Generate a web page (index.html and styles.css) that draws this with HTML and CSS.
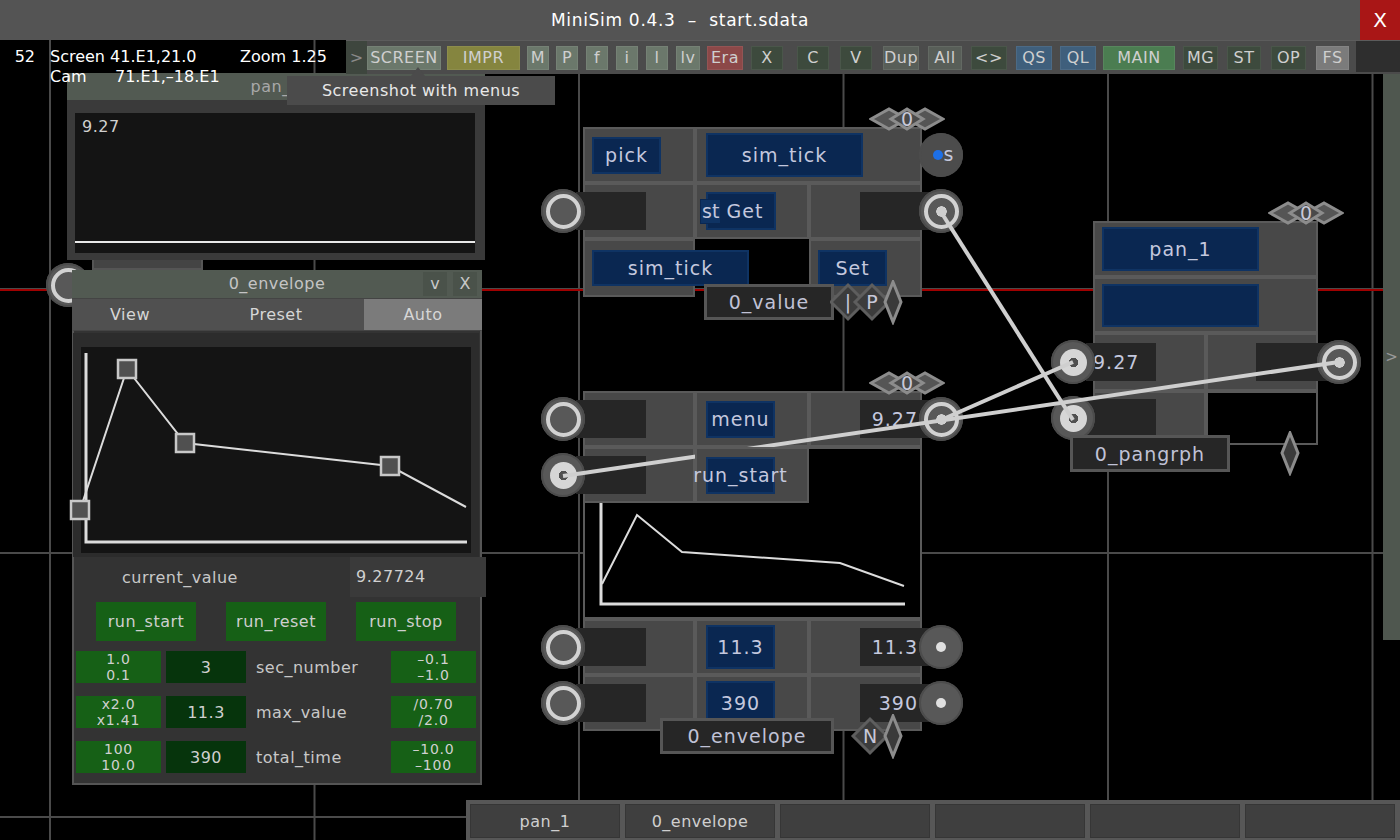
FILE: index.html
```html
<!DOCTYPE html>
<html>
<head>
<meta charset="utf-8">
<title>MiniSim</title>
<link rel="stylesheet" href="styles.css">
</head>
<body>
<header class="titlebar">
  <div class="title">MiniSim 0.4.3 &nbsp;–&nbsp; start.sdata</div>
  <div class="close">X</div>
</header>
<main class="workspace">
  <div class="topbar">
    <div class="hud">
      <div class="hud-row"><span class="hud-num">52</span><span class="hud-screen">Screen 41.E1,21.0</span><span>Zoom 1.25</span></div>
      <div class="hud-row"><span class="hud-num"></span><span class="hud-cam">Cam</span><span>71.E1,–18.E1</span></div>
    </div>
    <nav class="toolbar">
      <span class="tb-arrow">&gt;</span>
      <div class="tb-grid">
        <span class="tb g w74">SCREEN</span>
        <span class="tb y w73">IMPR</span>
        <span class="tb g w22">M</span>
        <span class="tb g w22">P</span>
        <span class="tb g w22">f</span>
        <span class="tb g w22">i</span>
        <span class="tb g w22">l</span>
        <span class="tb g w24">lv</span>
        <span class="tb r w36">Era</span>
        <span class="tb d w32">X</span>
        <span class="tb d w32">C</span>
        <span class="tb d w32">V</span>
        <span class="tb m w36">Dup</span>
        <span class="tb m w34">All</span>
        <span class="tb d w36">&lt;&gt;</span>
        <span class="tb b w36">QS</span>
        <span class="tb b w36">QL</span>
        <span class="tb mg w72">MAIN</span>
        <span class="tb d w35">MG</span>
        <span class="tb d w34">ST</span>
        <span class="tb d w35">OP</span>
        <span class="tb f w33">FS</span>
        <span class="tb-end"></span>
      </div>
    </nav>
    <div class="tooltip">Screenshot with menus</div>
  </div>

  <div class="redline"></div>

  <section class="panwin">
    <div class="panwin-head">pan_1</div>
    <div class="panwin-body">
      <div class="panwin-graph">
        <span class="panwin-val">9.27</span>
        <span class="panwin-line"></span>
      </div>
    </div>
    <div class="panwin-tab"></div>
  </section>
  <span class="pin free-pin ring"></span>

  <section class="envwin">
    <div class="env-head">
      <span class="env-title">0_envelope</span>
      <span class="env-btns"><span class="env-hb">v</span><span class="env-hb">X</span></span>
    </div>
    <div class="env-tabs">
      <span class="env-tab">View</span>
      <span class="env-tab">Preset</span>
      <span class="env-tab on">Auto</span>
    </div>
    <div class="env-body">
      <div class="env-frame">
        <div class="env-graph">
          <svg class="env-svg" width="390" height="206" viewBox="0 0 390 206">
            <polyline points="5,6 5,195 386,195" fill="none" stroke="#dcdcdc" stroke-width="3"/>
            <polyline points="-1,163 46,22 104,96 309,119 385,160" fill="none" stroke="#dcdcdc" stroke-width="2"/>
            <rect x="-10" y="154" width="18" height="18" fill="#505050" stroke="#c8c8c8" stroke-width="2.5"/>
            <rect x="37" y="13" width="18" height="18" fill="#505050" stroke="#c8c8c8" stroke-width="2.5"/>
            <rect x="95" y="87" width="18" height="18" fill="#505050" stroke="#c8c8c8" stroke-width="2.5"/>
            <rect x="300" y="110" width="18" height="18" fill="#505050" stroke="#c8c8c8" stroke-width="2.5"/>
          </svg>
        </div>
      </div>
      <div class="env-current">
        <span class="env-clabel">current_value</span>
        <span class="env-cval">9.27724</span>
      </div>
      <div class="env-actions">
        <span class="gbtn">run_start</span>
        <span class="gbtn">run_reset</span>
        <span class="gbtn">run_stop</span>
      </div>
      <div class="env-params">
        <span class="pstep"><span class="pl">1.0</span><span class="pl">0.1</span></span>
        <span class="pval">3</span>
        <span class="plabel">sec_number</span>
        <span class="pstep"><span class="pl">–0.1</span><span class="pl">–1.0</span></span>

        <span class="pstep"><span class="pl">x2.0</span><span class="pl">x1.41</span></span>
        <span class="pval">11.3</span>
        <span class="plabel">max_value</span>
        <span class="pstep"><span class="pl">/0.70</span><span class="pl">/2.0</span></span>

        <span class="pstep"><span class="pl">100</span><span class="pl">10.0</span></span>
        <span class="pval">390</span>
        <span class="plabel">total_time</span>
        <span class="pstep"><span class="pl">–10.0</span><span class="pl">–100</span></span>
      </div>
    </div>
  </section>

  <!-- node: 0_value -->
  <div class="node node-a">
    <div class="cell"><span class="nbtn w69 h37">pick</span></div>
    <div class="cell span23 pl9"><span class="nbtn w157 h44">sim_tick</span><span class="pin pin-r spin"><i class="bdot"></i><b>s</b></span></div>
    <div class="cell"><span class="inbox"></span><span class="pin pin-l ring"></span></div>
    <div class="cell pl9"><span class="nbtn w70 h38 getbtn"><span class="st">st</span>Get</span></div>
    <div class="cell out-cell"><span class="outbox"></span><span class="pin pin-r ringdot"></span></div>
    <div class="cell"><span class="nbtn w157 h36">sim_tick</span></div>
    <div class="cell col3"><span class="nbtn w69 h36">Set</span></div>

    <svg class="hdr-dia" width="76" height="24" viewBox="0 0 76 24">
      <polygon points="2,12 20,2 38,12 20,22" fill="#555" stroke="#8c8c8c" stroke-width="3"/>
      <polygon points="38,12 56,2 74,12 56,22" fill="#555" stroke="#8c8c8c" stroke-width="3"/>
      <polygon points="22,12 38,2 54,12 38,22" fill="#4a4a4a" stroke="#8c8c8c" stroke-width="3"/>
      <text x="38" y="19" text-anchor="middle" class="dia-t">0</text>
    </svg>
    <div class="node-label lbl-a">0_value</div>
    <svg class="lbl-dia-a" width="75" height="45" viewBox="0 0 75 45">
      <polygon points="1,22 18,5 35,22 18,39" fill="#3c3c3c" stroke="#5e5e5e" stroke-width="3"/>
      <polygon points="25,22 42,5 59,22 42,39" fill="#3c3c3c" stroke="#5e5e5e" stroke-width="3"/>
      <polygon points="55,22 63,2 71,22 63,42" fill="#3a3a3a" stroke="#8c8c8c" stroke-width="3"/>
      <text x="18" y="29" text-anchor="middle" class="dia-t">|</text>
      <text x="42" y="29" text-anchor="middle" class="dia-t">P</text>
    </svg>
  </div>

  <!-- node: 0_envelope -->
  <div class="node node-b">
    <div class="cell r1 c1"><span class="inbox"></span><span class="pin pin-l ring"></span></div>
    <div class="cell r1 c2 pl9"><span class="nbtn w69 h37">menu</span></div>
    <div class="cell r1 c3 out-cell"><span class="outbox">9.27</span><span class="pin pin-r ringdot"></span></div>
    <div class="graph-cell">
      <svg class="node-graph" width="335" height="168" viewBox="0 0 335 168">
        <polyline points="16,54 16,155 320,155" fill="none" stroke="#dcdcdc" stroke-width="3"/>
        <polyline points="17,135 52,66 97,103 255,114 319,137" fill="none" stroke="#dcdcdc" stroke-width="2"/>
      </svg>
    </div>
    <div class="cell r2 c1"><span class="inbox"></span><span class="pin pin-l filled"></span></div>
    <div class="cell r2 c2 pl9 above"><span class="nbtn w69 h37">run_start</span></div>
    <div class="cell r4 c1"><span class="inbox"></span><span class="pin pin-l ring"></span></div>
    <div class="cell r4 c2 pl9"><span class="nbtn w69 h44">11.3</span></div>
    <div class="cell r4 c3 out-cell"><span class="outbox">11.3</span><span class="pin pin-r dot"></span></div>
    <div class="cell r5 c1"><span class="inbox"></span><span class="pin pin-l ring"></span></div>
    <div class="cell r5 c2 pl9"><span class="nbtn w69 h44">390</span></div>
    <div class="cell r5 c3 out-cell"><span class="outbox">390</span><span class="pin pin-r dot"></span></div>

    <svg class="hdr-dia" width="76" height="24" viewBox="0 0 76 24">
      <polygon points="2,12 20,2 38,12 20,22" fill="#555" stroke="#8c8c8c" stroke-width="3"/>
      <polygon points="38,12 56,2 74,12 56,22" fill="#555" stroke="#8c8c8c" stroke-width="3"/>
      <polygon points="22,12 38,2 54,12 38,22" fill="#4a4a4a" stroke="#8c8c8c" stroke-width="3"/>
      <text x="38" y="19" text-anchor="middle" class="dia-t">0</text>
    </svg>
    <div class="node-label lbl-b">0_envelope</div>
    <svg class="lbl-dia-b" width="55" height="45" viewBox="0 0 55 45">
      <polygon points="3,22 20,5 37,22 20,39" fill="#3c3c3c" stroke="#5e5e5e" stroke-width="3"/>
      <polygon points="35,22 43,2 51,22 43,42" fill="#3a3a3a" stroke="#8c8c8c" stroke-width="3"/>
      <text x="20" y="29" text-anchor="middle" class="dia-t">N</text>
    </svg>
  </div>

  <!-- node: 0_pangrph -->
  <div class="node node-c">
    <div class="cell span12"><span class="nbtn w157 h44">pan_1</span></div>
    <div class="cell span12"><span class="nbtn w157 h43"></span></div>
    <div class="cell"><span class="inbox">9.27</span><span class="pin pin-l filled"></span></div>
    <div class="cell out-cell"><span class="outbox wide"></span><span class="pin pin-r2 ringdot"></span></div>
    <div class="cell"><span class="inbox"></span><span class="pin pin-l filled"></span></div>
    <div class="cell empty"></div>

    <svg class="hdr-dia hdr-c" width="76" height="24" viewBox="0 0 76 24">
      <polygon points="2,12 20,2 38,12 20,22" fill="#555" stroke="#8c8c8c" stroke-width="3"/>
      <polygon points="38,12 56,2 74,12 56,22" fill="#555" stroke="#8c8c8c" stroke-width="3"/>
      <polygon points="22,12 38,2 54,12 38,22" fill="#4a4a4a" stroke="#8c8c8c" stroke-width="3"/>
      <text x="38" y="19" text-anchor="middle" class="dia-t">0</text>
    </svg>
    <div class="node-label lbl-c">0_pangrph</div>
    <svg class="lbl-dia-c" width="20" height="45" viewBox="0 0 20 45">
      <polygon points="10,2 18,22 10,42 2,22" fill="#3a3a3a" stroke="#8c8c8c" stroke-width="3"/>
    </svg>
  </div>

  <svg class="wires" width="1400" height="800" viewBox="0 0 1400 800">
    <line x1="941" y1="172" x2="1073" y2="380" stroke="#cfcfcf" stroke-width="4"/>
    <line x1="941" y1="380" x2="1073" y2="322" stroke="#cfcfcf" stroke-width="4"/>
    <line x1="563" y1="436" x2="1339" y2="322" stroke="#cfcfcf" stroke-width="4"/>
  </svg>

  <div class="side-handle">&gt;</div>

  <nav class="tabbar">
    <span class="btab">pan_1</span>
    <span class="btab">0_envelope</span>
    <span class="btab"></span>
    <span class="btab"></span>
    <span class="btab"></span>
    <span class="btab"></span>
  </nav>
</main>
</body>
</html>
```

FILE: styles.css
```css
* { box-sizing: border-box; }
html, body { margin: 0; padding: 0; }
body {
  width: 1400px;
  height: 840px;
  overflow: hidden;
  background: #000;
  font-family: "DejaVu Sans", "Liberation Sans", sans-serif;
  color: #c8c8c8;
}

/* title bar */
.titlebar { display: flex; height: 40px; background: #545454; }
.title { flex: 1; text-align: center; line-height: 40px; font-size: 17px; letter-spacing: 0.7px; color: #fff; }
.close { width: 40px; background: #a91616; color: #fff; font-size: 20px; line-height: 40px; text-align: center; }

/* workspace canvas */
.workspace {
  position: relative;
  height: 800px;
  overflow: hidden;
  background-color: #000;
  background-image:
    linear-gradient(90deg, #4a4a4a 0 2px, transparent 2px),
    linear-gradient(180deg, #4a4a4a 0 2px, transparent 2px);
  background-size: 264.5px 100%, 100% 264px;
  background-position: 49px 0, 0 248px;
}
.redline { position: absolute; left: 0; right: 0; top: 249px; height: 2px; background: #a00000; }

/* top bar */
.topbar { position: relative; z-index: 20; display: flex; height: 34px; }
.hud { width: 346px; padding-top: 7px; font-size: 16px; line-height: 20px; color: #fff; }
.hud-row { display: flex; white-space: pre; }
.hud-num { width: 50px; padding-right: 15px; text-align: right; }
.hud-screen { width: 190px; }
.hud-cam { width: 65px; }

.toolbar { flex: 1; display: flex; height: 34px; background: #4b4b4b; border-top: 1px solid #5c5c5c; }
.tb-arrow { width: 21px; display: flex; align-items: center; justify-content: center; color: #8a8a8a; background: #3e463e; font-size: 16px; }
.tb-grid {
  flex: 1;
  display: grid;
  grid-template-columns: 80px 80px 29px 30px 30px 30px 30px 31px 44px 46px 43px 43px 45px 43px 45px 44px 43px 80px 44px 44px 45px 40px 1fr;
  align-items: center;
}
.tb {
  height: 24px;
  display: flex;
  align-items: center;
  justify-content: center;
  font-size: 16px;
  letter-spacing: 0.5px;
  color: #cfcfcf;
  border: 1px solid rgba(255,255,255,0.07);
}
.tb.g { background: #6b786b; }
.tb.y { background: #85853f; }
.tb.r { background: #8c4848; }
.tb.d { background: #3d4a3d; }
.tb.m { background: #585e58; }
.tb.b { background: #3f5f7c; }
.tb.mg { background: #4b7d51; }
.tb.f { background: #7b7b7b; }
.w22 { width: 22px; } .w24 { width: 24px; } .w32 { width: 32px; } .w33 { width: 33px; }
.w34 { width: 34px; } .w35 { width: 35px; } .w36 { width: 36px; } .w72 { width: 72px; }
.w73 { width: 73px; } .w74 { width: 74px; }
.tb-end { align-self: start; height: 31px; background: #2e2e2e; }

.tooltip {
  position: absolute;
  left: 287px;
  top: 36px;
  width: 268px;
  height: 29px;
  background: #4b4b4b;
  color: #e8e8e8;
  font-size: 16px;
  letter-spacing: 0.5px;
  display: flex;
  align-items: center;
  justify-content: center;
}
.tooltip::before {
  content: "";
  position: absolute;
  left: 124px;
  top: -9px;
  border-left: 7px solid transparent;
  border-right: 7px solid transparent;
  border-bottom: 9px solid #4b4b4b;
}

/* top-left pan window */
.panwin { position: absolute; left: 67px; top: 33px; width: 418px; }
.panwin-head { height: 27px; background: #525a52; text-align: center; line-height: 27px; font-size: 16px; letter-spacing: 0.5px; color: #a8a8a8; }
.panwin-body { height: 160px; background: #3a3a3a; padding: 13px 10px 7px 8px; }
.panwin-graph { height: 100%; background: #141414; display: flex; flex-direction: column; }
.panwin-val { padding: 4px 7px 0; font-size: 16px; letter-spacing: 0.5px; color: #d0d0d0; }
.panwin-line { margin-top: auto; margin-bottom: 10px; height: 2px; background: #e8e8e8; }
.panwin-tab { margin-left: 25px; width: 111px; height: 10px; background: #444; border: 2px solid #555; border-top: 0; }

/* pins */
.pin {
  position: absolute;
  top: 50%;
  width: 44px;
  height: 44px;
  margin-top: -22px;
  border-radius: 50%;
  background: #585858;
  box-shadow: inset 0 0 0 2px #4c4c4c;
  display: flex;
  align-items: center;
  justify-content: center;
}
.pin-l { left: -44px; }
.pin-r { right: -43px; }
.pin-r2 { right: -45px; }
.pin.ring::after, .pin.ringdot::after, .pin.filled::after, .pin.dot::after { content: ""; border-radius: 50%; }
.pin.ring::after { width: 27px; height: 27px; border: 4px solid #d2d2d2; background: #585858; }
.pin.ringdot::after { width: 27px; height: 27px; border: 4px solid #d2d2d2; background: radial-gradient(circle, #cfcfcf 0 5px, #585858 5.5px); }
.pin.filled::after { width: 27px; height: 27px; background: radial-gradient(circle, #505050 0 4.5px, #d6d6d6 5px); }
.pin.dot::after { width: 10px; height: 10px; background: #e0e0e0; }
.free-pin { left: 46px; top: 245px; }
.spin { background: #4c4c4c; }
.spin .bdot { width: 10px; height: 10px; border-radius: 50%; background: #1d6fe6; margin-left: 4px; }
.spin b { font-weight: normal; font-size: 19px; color: #c4c8dc; margin-top: -3px; margin-left: 1px; }

/* envelope window */
.envwin { position: absolute; left: 72px; top: 230px; width: 410px; }
.env-head { display: grid; height: 29px; background: #525a52; border-bottom: 1px solid #444; }
.env-title, .env-btns { grid-area: 1 / 1; }
.env-title { text-align: center; line-height: 28px; font-size: 16px; letter-spacing: 0.5px; color: #c4c4c4; }
.env-btns { justify-self: end; display: flex; gap: 6px; padding: 2px 5px 0 0; }
.env-hb { width: 24px; height: 24px; background: #4a524a; text-align: center; line-height: 24px; font-size: 16px; color: #c8c8c8; }
.env-tabs { display: grid; grid-template-columns: 116px 176px 118px; height: 31px; background: #505050; }
.env-tab { display: flex; align-items: center; justify-content: center; font-size: 16px; letter-spacing: 0.5px; color: #d6d6d6; }
.env-tab.on { background: #7b7b7b; }
.env-body { background: #333; border: 2px solid #555; border-top: 1px solid #444; padding: 2px 0 10px; }
.env-frame { margin: 0 1px 0 -1px; background: #2c2c2c; padding: 14px 8px 4px; }
.env-graph { height: 206px; background: #141414; }
.env-svg { display: block; overflow: visible; }
.env-current { display: flex; align-items: center; height: 40px; font-size: 16px; letter-spacing: 0.5px; }
.env-clabel { padding-left: 48px; }
.env-cval { margin-left: auto; margin-right: -6px; width: 136px; height: 40px; background: #3a3a3a; padding-left: 6px; line-height: 40px; color: #d0d0d0; }
.env-actions { display: flex; gap: 30px; padding-left: 22px; margin-top: 5px; }
.gbtn { width: 100px; height: 39px; background: #166016; display: flex; align-items: center; justify-content: center; font-size: 16px; letter-spacing: 0.5px; color: #cfcfcf; }
.env-params { display: grid; grid-template-columns: 85px 80px 1fr 85px; column-gap: 5px; row-gap: 13px; margin-top: 10px; padding: 0 4px 0 2px; }
.pstep, .pval, .plabel { height: 32px; display: flex; align-items: center; font-size: 16px; letter-spacing: 0.5px; }
.pstep { background: #166016; flex-direction: column; justify-content: center; color: #d0d0d0; font-size: 14px; letter-spacing: 0.8px; }
.pl { display: block; height: 16px; line-height: 16px; }
.pval { background: #06340c; justify-content: center; color: #d0d0d0; }
.plabel { padding-left: 5px; color: #c8c8c8; }

/* nodes */
.node { position: absolute; display: grid; }
.node-a { left: 583px; top: 87px; grid-template-columns: 112px 114px 113px; grid-template-rows: 56px 56px 58px; }
.node-b { left: 583px; top: 351px; grid-template-columns: 112px 114px 113px; grid-template-rows: 56px 56px 116px 56px 56px; }
.node-c { left: 1093px; top: 181px; grid-template-columns: 113px 112px; grid-template-rows: 56px 56px 58px 54px; }

.cell {
  position: relative;
  border: 2px solid #5a5a5a;
  background: #484848;
  display: flex;
  align-items: center;
  padding-left: 7px;
}
.cell.pl9 { padding-left: 9px; }
.cell.empty { background: transparent; }
.span23 { grid-column: 2 / 4; }
.span12 { grid-column: 1 / 3; }
.col3 { grid-column: 3; }
.r1 { grid-row: 1; } .r2 { grid-row: 2; } .r4 { grid-row: 4; } .r5 { grid-row: 5; }
.c1 { grid-column: 1; } .c2 { grid-column: 2; } .c3 { grid-column: 3; }
.above { z-index: 6; }

.graph-cell { grid-row: 2 / 4; grid-column: 1 / 4; border: 2px solid #5a5a5a; background: #000; }
.node-graph { display: block; }

.nbtn {
  flex-shrink: 0;
  display: flex;
  align-items: center;
  justify-content: center;
  background: #0a2751;
  border: 2px solid #0f3363;
  color: #c4c8de;
  font-size: 19px;
  letter-spacing: 1px;
  white-space: nowrap;
  position: relative;
}
.w69 { width: 69px; } .w70 { width: 70px; } .w157 { width: 157px; }
.h36 { height: 36px; } .h37 { height: 37px; } .h38 { height: 38px; } .h43 { height: 43px; } .h44 { height: 44px; }
.getbtn { padding-left: 8px; }
.st {
  position: absolute;
  left: -8px;
  top: 5px;
  height: 25px;
  padding: 0 1px;
  background: #0f3363;
  border: 1px solid #0a2751;
  line-height: 23px;
  letter-spacing: 0;
}

.inbox {
  flex-shrink: 0;
  margin-left: -16px;
  width: 70px;
  height: 38px;
  background: #262626;
  padding-left: 7px;
  line-height: 38px;
  font-size: 19px;
  letter-spacing: 1px;
  color: #c4c8de;
}
.out-cell { justify-content: flex-end; padding-left: 0; }
.outbox {
  flex-shrink: 0;
  margin-right: -20px;
  width: 80px;
  height: 38px;
  background: #262626;
  text-align: right;
  padding-right: 22px;
  line-height: 38px;
  font-size: 19px;
  letter-spacing: 1px;
  color: #c4c8de;
}
.outbox.wide { margin-right: -24px; width: 84px; }

.hdr-dia { position: absolute; left: 286px; top: -20px; }
.hdr-c { left: 175px; }
.dia-t { font-family: "DejaVu Sans", sans-serif; font-size: 19px; fill: #c8c8d8; }

.node-label {
  position: absolute;
  background: #262626;
  border: 3px solid #565656;
  color: #c0c2d6;
  font-size: 19px;
  letter-spacing: 1px;
  display: flex;
  align-items: center;
  justify-content: center;
  z-index: 2;
}
.lbl-a { left: 121px; top: 157px; width: 130px; height: 36px; }
.lbl-b { left: 77px; top: 327px; width: 174px; height: 36px; }
.lbl-c { left: -23px; top: 214px; width: 160px; height: 37px; }
.lbl-dia-a { position: absolute; left: 247px; top: 153px; z-index: 2; }
.lbl-dia-b { position: absolute; left: 267px; top: 323px; z-index: 2; }
.lbl-dia-c { position: absolute; left: 187px; top: 210px; z-index: 2; }

/* wires */
.wires { position: absolute; left: 0; top: 0; z-index: 5; pointer-events: none; }

/* right side handle */
.side-handle {
  position: absolute;
  right: 0;
  top: 34px;
  width: 17px;
  height: 566px;
  background: #4f574f;
  color: #9a9a9a;
  font-size: 15px;
  display: flex;
  align-items: center;
  justify-content: center;
}

/* bottom tab bar */
.tabbar {
  position: absolute;
  left: 466px;
  bottom: 0;
  width: 934px;
  height: 40px;
  background: #575757;
  padding: 4px 4px 2px 4px;
  display: flex;
  gap: 5px;
}
.btab {
  width: 150px;
  background: #3f3f3f;
  border: 1px solid #363636;
  display: flex;
  align-items: center;
  justify-content: center;
  font-size: 16px;
  letter-spacing: 0.5px;
  color: #cfcfcf;
}
```
